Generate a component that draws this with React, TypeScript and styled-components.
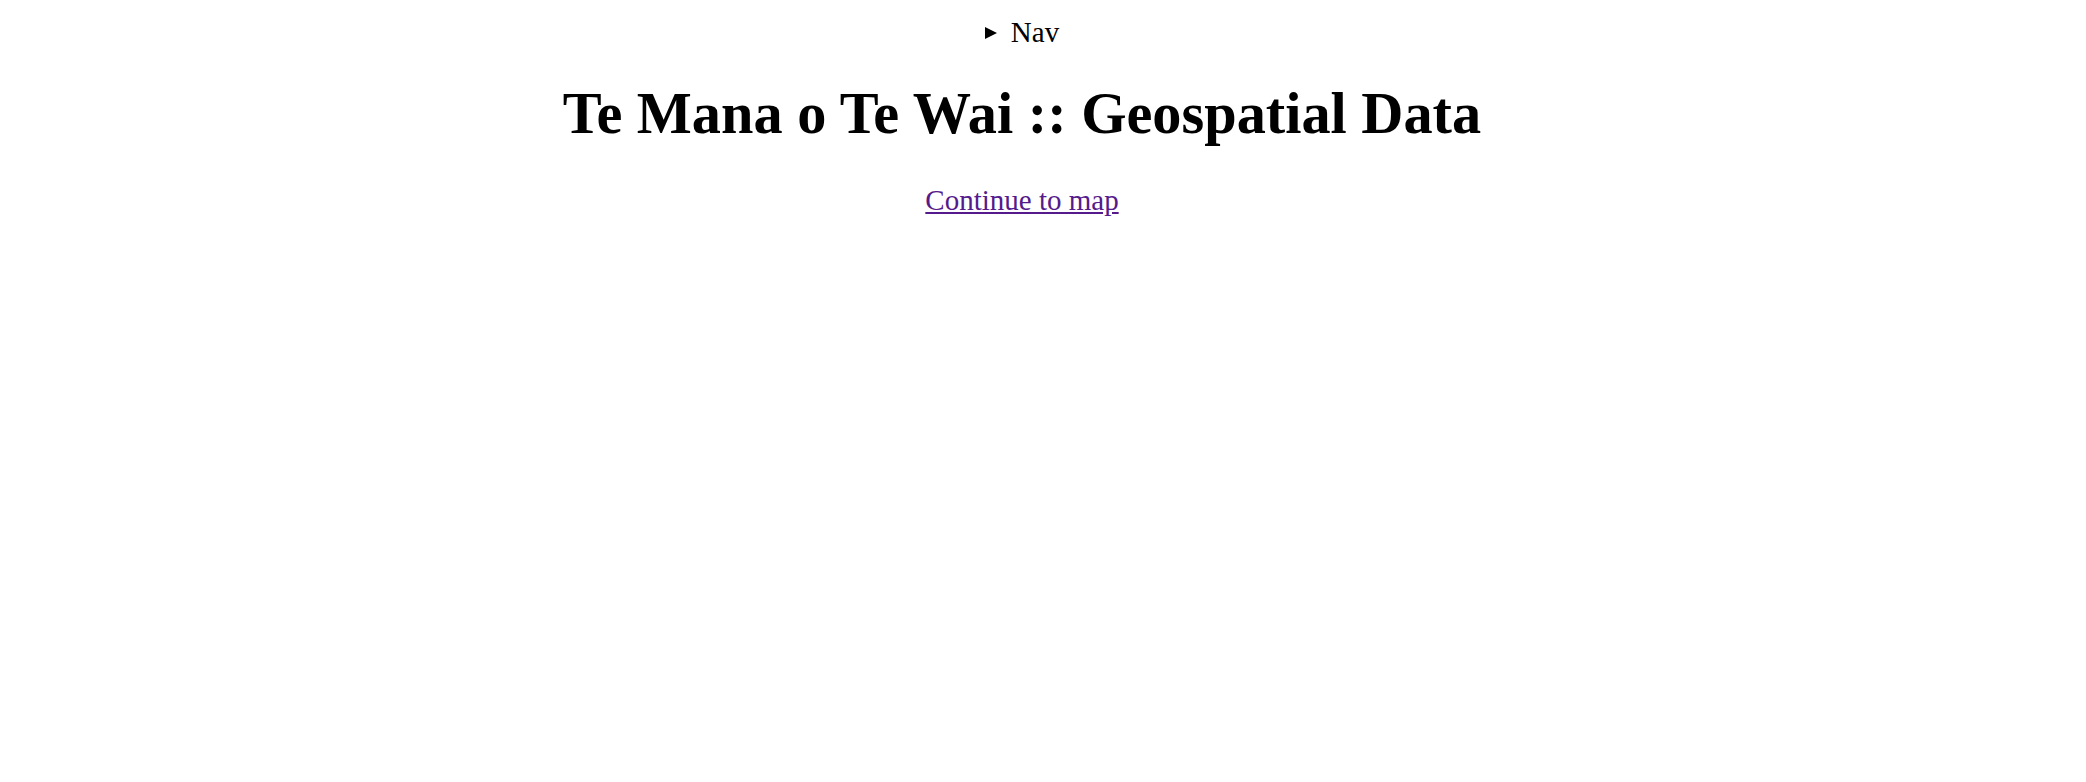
import React from "react";
import styled, { createGlobalStyle } from "styled-components";

const GlobalStyle = createGlobalStyle`
  html, body {
    margin: 0;
    padding: 0;
    background: #ffffff;
  }
  body {
    font-family: "Liberation Serif", "Times New Roman", serif;
    color: #000000;
  }
`;

const Page = styled.main`
  display: flex;
  flex-direction: column;
  align-items: center;
  padding: 16px 42px 0 0;
  text-align: center;
`;

const NavDetails = styled.details`
  font-size: 29px;
  line-height: 33px;
`;

const NavSummary = styled.summary`
  cursor: pointer;
  list-style: none;

  &::-webkit-details-marker {
    display: none;
  }

  &::before {
    content: "";
    display: inline-block;
    width: 0;
    height: 0;
    border-left: 12px solid #000000;
    border-top: 6px solid transparent;
    border-bottom: 6px solid transparent;
    margin-right: 14px;
    vertical-align: 3.5px;
  }
`;

const Title = styled.h1`
  margin: 32px 0 37px;
  font-size: 58.3px;
  line-height: 66px;
  font-weight: 700;
`;

const LinkLine = styled.p`
  margin: 0;
  font-size: 29px;
  line-height: 33px;
`;

const MapLink = styled.a`
  color: #551a8b;
  text-decoration: underline;
`;

export default function App() {
  return (
    <>
      <GlobalStyle />
      <Page>
        <NavDetails>
          <NavSummary>Nav</NavSummary>
        </NavDetails>
        <Title>Te Mana o Te Wai :: Geospatial Data</Title>
        <LinkLine>
          <MapLink href="#map">Continue to map</MapLink>
        </LinkLine>
      </Page>
    </>
  );
}
